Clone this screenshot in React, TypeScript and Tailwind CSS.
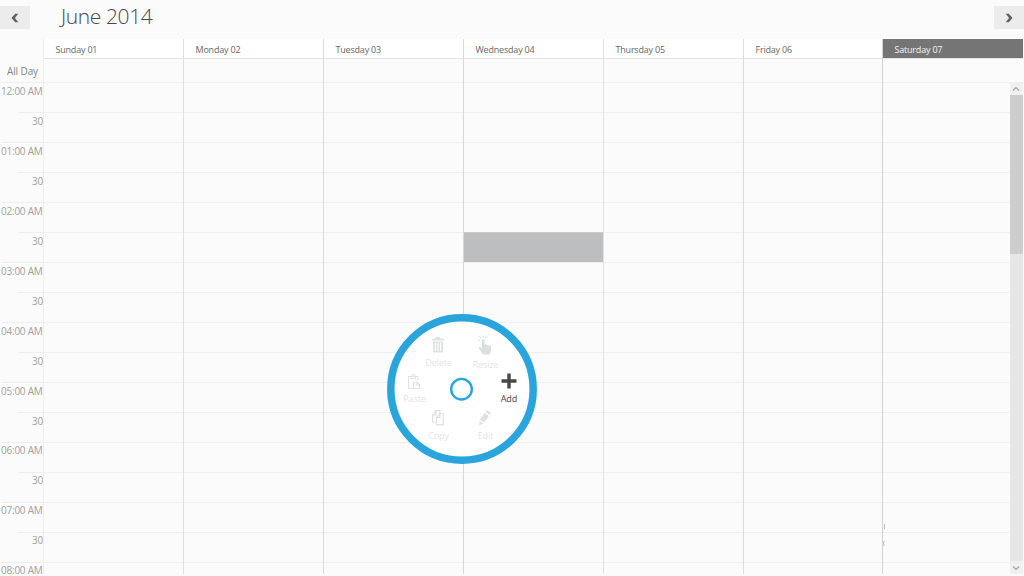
import React from 'react';

const days = [
  { label: 'Sunday 01', col: 'w-[140px] border-[#eeeeee]' },
  { label: 'Monday 02', col: 'w-[140px] border-[#dfdfdf]' },
  { label: 'Tuesday 03', col: 'w-[140px] border-[#dadada]' },
  { label: 'Wednesday 04', col: 'w-[140px] border-[#d6d6d6]' },
  { label: 'Thursday 05', col: 'w-[140px] border-[#e2e2e2]' },
  { label: 'Friday 06', col: 'w-[139px] border-[#dcdcdc]' },
  { label: 'Saturday 07', col: 'w-[141px] border-[#d2d2d2]' },
];

const times = ['12:00 AM', '01:00 AM', '02:00 AM', '03:00 AM', '04:00 AM', '05:00 AM', '06:00 AM', '07:00 AM', '08:00 AM'];
const slots = times.flatMap((t) => [t, '30']).slice(0, 17);

function Chevron({ flip = false }: { flip?: boolean }) {
  return (
    <svg width="8" height="10" viewBox="0 0 8 10" className={flip ? '-scale-x-100' : ''}>
      <path d="M4.2 .8H7.3L3.9 5L7.3 9.2H4.2L.5 5Z" fill="#606060" />
    </svg>
  );
}

function DeleteIcon() {
  return (
    <svg width="14" height="18" viewBox="0 0 14 18" fill="#dfe1e1">
      <path d="M1.3 2.6H4.7V1H9.3V2.6H12.7V4.4H1.3Z" />
      <path fillRule="evenodd" d="M2 5.5H12V16.5H2ZM3.8 6.8V15H5V6.8ZM6.4 6.8V15H7.6V6.8ZM9 6.8V15H10.2V6.8Z" />
    </svg>
  );
}

function ResizeIcon() {
  return (
    <svg width="16" height="22" viewBox="0 0 16 22" fill="none">
      <path d="M.8 4.9L3 5.5M2.2 1.4L4 3.2M6.2 .4V2.6M10.2 1.4L8.4 3.2" stroke="#dddfdf" strokeWidth="1.2" />
      <path d="M5 4.7Q6.3 3.6 7.5 4.7V9.6Q9 8.9 9.8 10.1Q11.2 9.5 12 10.7Q13.5 10.5 14 12V15.6Q13.6 18.3 12 19.5H6.4L2.2 14.2Q1.3 12.8 2.2 12.1Q3.2 11.6 5 13.4Z" fill="#dddfdf" />
    </svg>
  );
}

function PasteIcon() {
  return (
    <svg width="14" height="18" viewBox="0 0 14 18" fill="none" stroke="#e1e3e3" strokeWidth="1.1">
      <path d="M6 15.5H1.6V3.5H10.8V7.5M4 3.5V5.5H8.6V3.5M4.9 3.2V1.8H7.7V3.2" />
      <path d="M6.5 9.3H10L12.6 11.8V15.5H6.5ZM9.8 9.3V12H12.6" />
    </svg>
  );
}

function CopyIcon() {
  return (
    <svg width="14" height="18" viewBox="0 0 14 18" fill="none" stroke="#dfe1e1" strokeWidth="1.2">
      <path d="M5.5 13H1.6V6L5 1.7H9V5" />
      <path d="M5 1.7V6H1.6M9 4.5H12.2V15.8H5.5V8.5ZM9 4.5V8.5H5.5" />
    </svg>
  );
}

function EditIcon() {
  return (
    <svg width="14" height="18" viewBox="0 0 14 18" fill="#dfe1e1">
      <path d="M8.9 1L13 3.8L11.7 5.9L7.5 3.1ZM6.7 4.1L10.9 6.9L6.2 13.6L2 10.8ZM1.5 11.8L5.2 14.3L1.2 16.4Z" />
    </svg>
  );
}

const tools = [
  { label: 'Delete', pos: 'left-[31px] top-[21px]', icon: <DeleteIcon /> },
  { label: 'Resize', pos: 'left-[78px] top-[22px]', icon: <ResizeIcon /> },
  { label: 'Paste', pos: 'left-[7px] top-[58px]', icon: <PasteIcon /> },
  { label: 'Copy', pos: 'left-[31px] top-[94px]', icon: <CopyIcon /> },
  { label: 'Edit', pos: 'left-[78px] top-[94px]', icon: <EditIcon /> },
];

function RadialMenu() {
  return (
    <div className="absolute left-[387px] top-[314px] h-[150px] w-[150px]">
      <svg width="150" height="150" viewBox="0 0 150 150" fill="white" stroke="#29a5dc" className="absolute left-0 top-0">
        <circle cx="75" cy="75" r="71.2" strokeWidth="7.5" />
        <circle cx="74.5" cy="75.2" r="10.3" strokeWidth="2.4" />
      </svg>
      {tools.map((t) => (
        <div key={t.label} className={`absolute flex w-[41px] flex-col items-center text-[#e3e5e5] ${t.pos}`}>
          <div className="flex h-[20px] items-center pr-px">{t.icon}</div>
          <span
            className={`text-[9px] leading-[14px] tracking-[-0.1px] ${
              t.label === 'Resize' ? 'mt-[2px]' : t.label === 'Paste' ? '' : 'mt-px'
            }`}
          >
            {t.label}
          </span>
        </div>
      ))}
      <div className="absolute left-[102px] top-[57px] flex w-[40px] flex-col items-center text-[#444]">
        <div className="flex h-[21px] items-center pb-px">
          <svg width="16" height="16" viewBox="0 0 16 16">
            <path d="M6.3 .5H9.7V6.3H15.5V9.7H9.7V15.5H6.3V9.7H.5V6.3H6.3Z" fill="#484848" />
          </svg>
        </div>
        <span className="text-[9px] leading-[14px]">Add</span>
      </div>
    </div>
  );
}

export default function App() {
  return (
    <div className="relative flex h-[576px] w-[1024px] flex-col overflow-hidden bg-[#fbfbfb] font-['Open_Sans','Noto_Sans',sans-serif]">
      <header className="flex h-[39px] shrink-0 items-start">
        <button className="mt-[6px] flex h-[23px] w-[30px] items-center justify-center bg-[#ececec]">
          <Chevron />
        </button>
        <h1 className="ml-[31px] mt-px text-[21px] font-light leading-[30px] tracking-[-0.4px] text-[#484848]">June 2014</h1>
        <button className="ml-auto mt-[6px] flex h-[23px] w-[30px] items-center justify-center bg-[#ececec]">
          <Chevron flip />
        </button>
      </header>

      <div className="flex h-[535px] shrink-0 items-start">
        <aside className="w-[43px] shrink-0 text-[10px] text-[#777]">
          <div className="flex h-[43px] items-end justify-end pr-[5px]">
            <span className="mb-[4px] whitespace-nowrap leading-[14px] tracking-[-0.1px] text-[#858585]">All Day</span>
          </div>
          {slots.map((s, i) => (
            <div key={i} className={`flex justify-end ${i === 16 ? 'h-[14px]' : 'h-[30px]'}`}>
              <div className={`${s === '30' ? 'w-[25px]' : 'w-[41px]'} border-t border-[#eeeeee]`}>
                <div
                  className={`flex justify-end whitespace-nowrap leading-[14px] ${
                    s === '30' ? 'tracking-[-0.2px]' : 'pr-[0.5px] tracking-[-0.25px]'
                  } ${i >= 12 ? 'mt-0' : 'mt-px'} ${i === 16 ? 'h-[13px]' : ''} text-[#a0a0a0]`}
                >
                  {s}
                </div>
              </div>
            </div>
          ))}
        </aside>

        {days.map((d, c) => (
          <section key={d.label} className={`h-[535px] shrink-0 overflow-hidden border-l ${d.col}`}>
            <div
              className={`flex h-[20px] items-center border-b border-[#e4e4e4] pl-[11.5px] pt-[2px] text-[9px] tracking-[-0.2px] ${
                c === 6 ? 'bg-[#757575] text-[#f4f4f4]' : 'bg-white text-[#686868]'
              }`}
            >
              {d.label}
            </div>
            <div className="h-[23px]" />
            <div className={c === 6 ? 'flex' : ''}>
              <div className={c === 6 ? 'w-[127px]' : ''}>
                {slots.map((_, i) => (
                  <div
                    key={i}
                    className={`h-[30px] border-t ${c === 3 && i === 5 ? 'border-[#c8c9ca] bg-[#bdbebf]' : 'border-[#f0f0f0]'}`}
                  >
                    {c === 6 && i === 14 && <div className="mt-[21px] h-[5px] w-[2px] border-r border-[#bbb]" />}
                    {c === 6 && i === 15 && <div className="mt-[8px] h-[5px] w-[2px] rounded-l-sm border-y border-l border-[#c4c4c4]" />}
                  </div>
                ))}
              </div>
              {c === 6 && (
                <div className="flex h-[492px] w-[12.6px] flex-col bg-[#e6e6e6]">
                  <div className="flex h-[13px] items-center justify-center bg-[#f0f0f0]">
                    <svg width="8" height="6" viewBox="0 0 8 6" fill="none" stroke="#a0a0a0" strokeWidth="1.2">
                      <path d="M1 4.5L4 1.5L7 4.5" />
                    </svg>
                  </div>
                  <div className="h-[159px] bg-[#cdcdcd]" />
                  <div className="mt-auto flex h-[13px] items-center justify-center bg-[#f0f0f0]">
                    <svg width="8" height="6" viewBox="0 0 8 6" fill="none" stroke="#a0a0a0" strokeWidth="1.2">
                      <path d="M1 1.5L4 4.5L7 1.5" />
                    </svg>
                  </div>
                </div>
              )}
            </div>
          </section>
        ))}
      </div>

      <RadialMenu />
    </div>
  );
}
